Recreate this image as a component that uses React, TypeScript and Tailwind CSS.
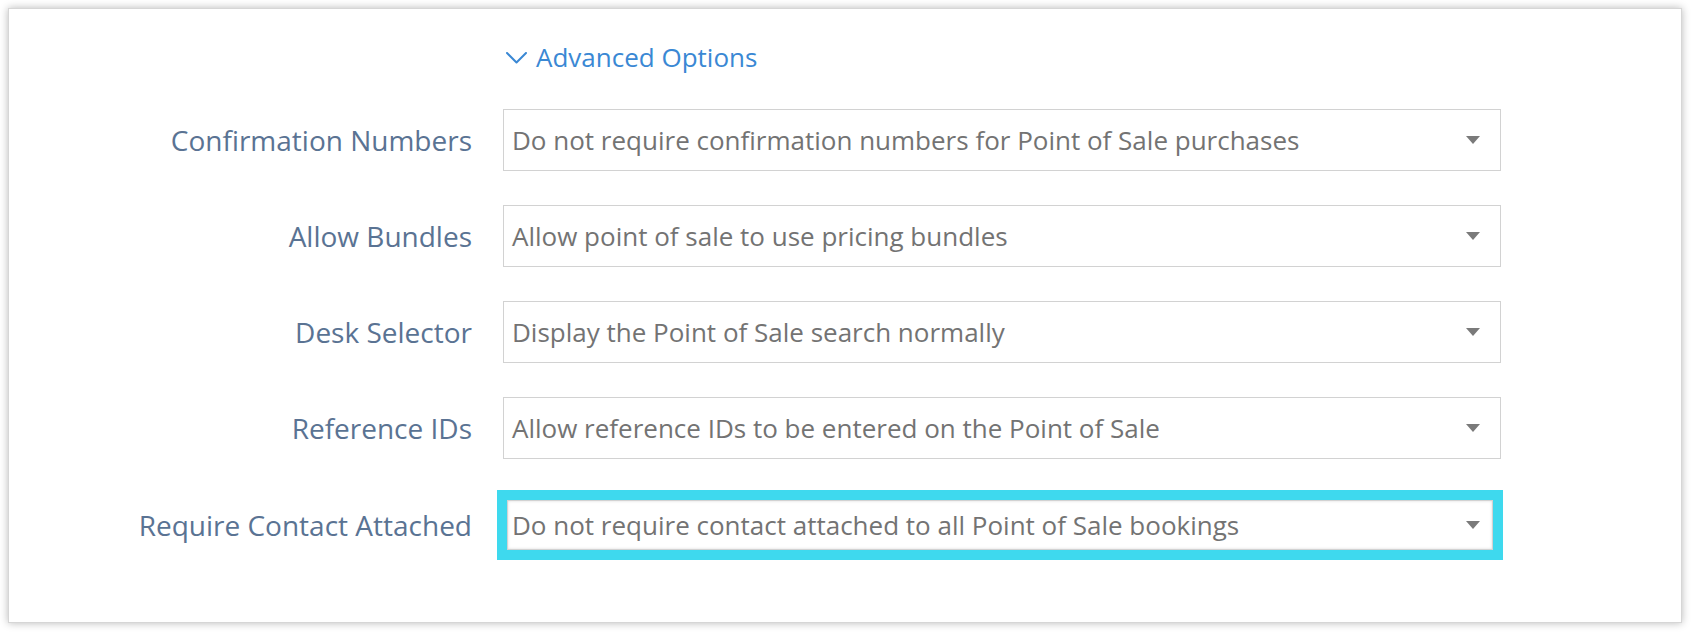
const rows = [
  { label: 'Confirmation Numbers', value: 'Do not require confirmation numbers for Point of Sale purchases' },
  { label: 'Allow Bundles', value: 'Allow point of sale to use pricing bundles' },
  { label: 'Desk Selector', value: 'Display the Point of Sale search normally' },
  { label: 'Reference IDs', value: 'Allow reference IDs to be entered on the Point of Sale' },
];

// flecha del select
const Caret = () => (
  <svg width="14" height="8" viewBox="0 0 14 8" className="shrink-0">
    <path d="M0 0h14L7 8z" fill="#7a7a7a" />
  </svg>
);

const SelectBox = ({ value, className = '' }: { value: string; className?: string }) => (
  <div className={`flex items-center justify-between border border-[#d2d2d2] bg-white ${className}`}>
    <span className="text-[26px] text-[#737373] leading-none">{value}</span>
    <Caret />
  </div>
);

export default function App() {
  return (
    <div className="min-h-screen bg-white pt-[8px] pl-[8px] pr-[10px]" style={{ fontFamily: '"Open Sans", sans-serif' }}>
      <div className="h-[615px] border border-[#d6d6d6] bg-white pt-[32px] shadow-[0_0_8px_rgba(0,0,0,0.28)]">
        <div className="flex h-[32px] items-center pl-[497px] text-[26px] text-[#3a88d4]">
          <svg width="21" height="12" viewBox="0 0 21 12" fill="none" className="mr-[9px] mt-[2px]">
            <path d="M1 1l9.5 9.5L20 1" stroke="#3a88d4" strokeWidth="2" strokeLinecap="round" strokeLinejoin="round" />
          </svg>
          <span className="leading-none">Advanced Options</span>
        </div>

        <div className="mt-[36px] flex flex-col gap-[34px]">
          {rows.map((r) => (
            <div key={r.label} className="flex items-center">
              <div className="w-[463px] text-right text-[28px] text-[#5a7393] leading-none">{r.label}</div>
              <SelectBox value={r.value} className="ml-[31px] h-[62px] w-[998px] pl-[8px] pr-[20px]" />
            </div>
          ))}
        </div>

        <div className="mt-[31px] flex items-center">
          <div className="w-[463px] text-right text-[28px] text-[#5a7393] leading-none">Require Contact Attached</div>
          <div className="ml-[25px] h-[70px] w-[1006px] border-[10px] border-[#3ed9ee]">
            <SelectBox value="Do not require contact attached to all Point of Sale bookings" className="h-full w-full pl-[4px] pr-[12px] shadow-[inset_0_0_3px_rgba(0,0,0,0.15)]" />
          </div>
        </div>
      </div>
    </div>
  );
}
